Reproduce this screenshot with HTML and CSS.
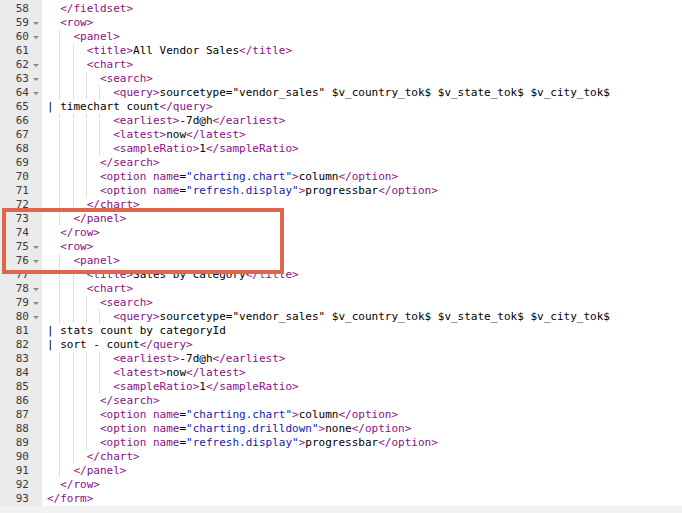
FILE: index.html
```html
<!doctype html>
<html>
<head>
<meta charset="utf-8">
<title>dashboard.xml</title>
<link rel="stylesheet" href="styles.css">
</head>
<body>
<div class="editor">
  <div class="lines">
    <div class="row"><span class="gc"><b>58</b><i></i></span><span class="code">  <span class="t">&lt;/fieldset&gt;</span></span></div>
    <div class="row"><span class="gc"><b>59</b><i class="fold"></i></span><span class="code">  <span class="t">&lt;row&gt;</span></span></div>
    <div class="row"><span class="gc"><b>60</b><i class="fold"></i></span><span class="code"><span class="ig">  </span>  <span class="t">&lt;panel&gt;</span></span></div>
    <div class="row"><span class="gc"><b>61</b><i></i></span><span class="code"><span class="ig">  </span><span class="ig">  </span>  <span class="t">&lt;title&gt;</span>All Vendor Sales<span class="t">&lt;/title&gt;</span></span></div>
    <div class="row"><span class="gc"><b>62</b><i class="fold"></i></span><span class="code"><span class="ig">  </span><span class="ig">  </span>  <span class="t">&lt;chart&gt;</span></span></div>
    <div class="row"><span class="gc"><b>63</b><i class="fold"></i></span><span class="code"><span class="ig">  </span><span class="ig">  </span><span class="ig">  </span>  <span class="t">&lt;search&gt;</span></span></div>
    <div class="row"><span class="gc"><b>64</b><i class="fold"></i></span><span class="code"><span class="ig">  </span><span class="ig">  </span><span class="ig">  </span><span class="ig">  </span>  <span class="t">&lt;query&gt;</span>sourcetype="vendor_sales" $v_country_tok$ $v_state_tok$ $v_city_tok$</span></div>
    <div class="row"><span class="gc"><b>65</b><i></i></span><span class="code">| timechart count<span class="t">&lt;/query&gt;</span></span></div>
    <div class="row"><span class="gc"><b>66</b><i></i></span><span class="code"><span class="ig">  </span><span class="ig">  </span><span class="ig">  </span><span class="ig">  </span>  <span class="t">&lt;earliest&gt;</span>-7d@h<span class="t">&lt;/earliest&gt;</span></span></div>
    <div class="row"><span class="gc"><b>67</b><i></i></span><span class="code"><span class="ig">  </span><span class="ig">  </span><span class="ig">  </span><span class="ig">  </span>  <span class="t">&lt;latest&gt;</span>now<span class="t">&lt;/latest&gt;</span></span></div>
    <div class="row"><span class="gc"><b>68</b><i></i></span><span class="code"><span class="ig">  </span><span class="ig">  </span><span class="ig">  </span><span class="ig">  </span>  <span class="t">&lt;sampleRatio&gt;</span>1<span class="t">&lt;/sampleRatio&gt;</span></span></div>
    <div class="row"><span class="gc"><b>69</b><i></i></span><span class="code"><span class="ig">  </span><span class="ig">  </span><span class="ig">  </span>  <span class="t">&lt;/search&gt;</span></span></div>
    <div class="row"><span class="gc"><b>70</b><i></i></span><span class="code"><span class="ig">  </span><span class="ig">  </span><span class="ig">  </span>  <span class="t">&lt;option</span> <span class="a">name</span>=<span class="s">"charting.chart"</span><span class="t">&gt;</span>column<span class="t">&lt;/option&gt;</span></span></div>
    <div class="row"><span class="gc"><b>71</b><i></i></span><span class="code"><span class="ig">  </span><span class="ig">  </span><span class="ig">  </span>  <span class="t">&lt;option</span> <span class="a">name</span>=<span class="s">"refresh.display"</span><span class="t">&gt;</span>progressbar<span class="t">&lt;/option&gt;</span></span></div>
    <div class="row"><span class="gc"><b>72</b><i></i></span><span class="code"><span class="ig">  </span><span class="ig">  </span>  <span class="t">&lt;/chart&gt;</span></span></div>
    <div class="row"><span class="gc"><b>73</b><i></i></span><span class="code"><span class="ig">  </span>  <span class="t">&lt;/panel&gt;</span></span></div>
    <div class="row"><span class="gc"><b>74</b><i></i></span><span class="code">  <span class="t">&lt;/row&gt;</span></span></div>
    <div class="row"><span class="gc"><b>75</b><i class="fold"></i></span><span class="code">  <span class="t">&lt;row&gt;</span></span></div>
    <div class="row"><span class="gc"><b>76</b><i class="fold"></i></span><span class="code"><span class="ig">  </span>  <span class="t">&lt;panel&gt;</span></span></div>
    <div class="row"><span class="gc"><b>77</b><i></i></span><span class="code"><span class="ig">  </span><span class="ig">  </span>  <span class="t">&lt;title&gt;</span>Sales by Category<span class="t">&lt;/title&gt;</span></span></div>
    <div class="row"><span class="gc"><b>78</b><i class="fold"></i></span><span class="code"><span class="ig">  </span><span class="ig">  </span>  <span class="t">&lt;chart&gt;</span></span></div>
    <div class="row"><span class="gc"><b>79</b><i class="fold"></i></span><span class="code"><span class="ig">  </span><span class="ig">  </span><span class="ig">  </span>  <span class="t">&lt;search&gt;</span></span></div>
    <div class="row"><span class="gc"><b>80</b><i class="fold"></i></span><span class="code"><span class="ig">  </span><span class="ig">  </span><span class="ig">  </span><span class="ig">  </span>  <span class="t">&lt;query&gt;</span>sourcetype="vendor_sales" $v_country_tok$ $v_state_tok$ $v_city_tok$</span></div>
    <div class="row"><span class="gc"><b>81</b><i></i></span><span class="code">| stats count by categoryId</span></div>
    <div class="row"><span class="gc"><b>82</b><i></i></span><span class="code">| sort - count<span class="t">&lt;/query&gt;</span></span></div>
    <div class="row"><span class="gc"><b>83</b><i></i></span><span class="code"><span class="ig">  </span><span class="ig">  </span><span class="ig">  </span><span class="ig">  </span>  <span class="t">&lt;earliest&gt;</span>-7d@h<span class="t">&lt;/earliest&gt;</span></span></div>
    <div class="row"><span class="gc"><b>84</b><i></i></span><span class="code"><span class="ig">  </span><span class="ig">  </span><span class="ig">  </span><span class="ig">  </span>  <span class="t">&lt;latest&gt;</span>now<span class="t">&lt;/latest&gt;</span></span></div>
    <div class="row"><span class="gc"><b>85</b><i></i></span><span class="code"><span class="ig">  </span><span class="ig">  </span><span class="ig">  </span><span class="ig">  </span>  <span class="t">&lt;sampleRatio&gt;</span>1<span class="t">&lt;/sampleRatio&gt;</span></span></div>
    <div class="row"><span class="gc"><b>86</b><i></i></span><span class="code"><span class="ig">  </span><span class="ig">  </span><span class="ig">  </span>  <span class="t">&lt;/search&gt;</span></span></div>
    <div class="row"><span class="gc"><b>87</b><i></i></span><span class="code"><span class="ig">  </span><span class="ig">  </span><span class="ig">  </span>  <span class="t">&lt;option</span> <span class="a">name</span>=<span class="s">"charting.chart"</span><span class="t">&gt;</span>column<span class="t">&lt;/option&gt;</span></span></div>
    <div class="row"><span class="gc"><b>88</b><i></i></span><span class="code"><span class="ig">  </span><span class="ig">  </span><span class="ig">  </span>  <span class="t">&lt;option</span> <span class="a">name</span>=<span class="s">"charting.drilldown"</span><span class="t">&gt;</span>none<span class="t">&lt;/option&gt;</span></span></div>
    <div class="row"><span class="gc"><b>89</b><i></i></span><span class="code"><span class="ig">  </span><span class="ig">  </span><span class="ig">  </span>  <span class="t">&lt;option</span> <span class="a">name</span>=<span class="s">"refresh.display"</span><span class="t">&gt;</span>progressbar<span class="t">&lt;/option&gt;</span></span></div>
    <div class="row"><span class="gc"><b>90</b><i></i></span><span class="code"><span class="ig">  </span><span class="ig">  </span>  <span class="t">&lt;/chart&gt;</span></span></div>
    <div class="row"><span class="gc"><b>91</b><i></i></span><span class="code"><span class="ig">  </span>  <span class="t">&lt;/panel&gt;</span></span></div>
    <div class="row"><span class="gc"><b>92</b><i></i></span><span class="code">  <span class="t">&lt;/row&gt;</span></span></div>
    <div class="row"><span class="gc"><b>93</b><i></i></span><span class="code"><span class="t">&lt;/form&gt;</span></span></div>
  </div>
  <div class="callout"></div>
</div>
</body>
</html>
```

FILE: styles.css
```css
* {margin: 0; padding: 0; box-sizing: border-box;}
body {
  background: #f2f2f2;
  font-family: "DejaVu Sans Mono", "Liberation Mono", monospace;
  font-size: 11px;
}
.editor {
  position: relative;
  height: 506px;
  overflow: hidden;
  background: #fff;
  border-top: 2px solid #ebebeb;
  border-top: 0;
}
.lines {
  padding-top: 2px;
  background: linear-gradient(to right, #ebebeb 42px, #fff 42px);
}
.row {
  display: flex;
  height: 14px;
  line-height: 14px;
}
.gc {
  display: flex;
  flex: none;
  width: 42px;
  background: #ebebeb;
  color: #3a3a3a;
}
.gc b {
  font-weight: normal;
  width: 29px;
  text-align: right;
}
.gc i {
  position: relative;
  width: 13px;
}
.gc i.fold:after {
  content: "";
  position: absolute;
  left: 4px;
  top: 6px;
  border-left: 3px solid transparent;
  border-right: 3px solid transparent;
  border-top: 3px solid #8a8a8a;
}
.code {
  padding-left: 5px;
  white-space: pre;
  color: #000;
}
.ig {
  display: inline-block;
  height: 14px;
  vertical-align: top;
  background-image: repeating-linear-gradient(to bottom, #c4c4c4 0 1px, transparent 1px 2px);
  background-size: 1px 100%;
  background-position: right top;
  background-repeat: no-repeat;
}
.t {color: #881280;}
.a {color: #881280;}
.s {color: #1a1aa6;}
.callout {
  position: absolute;
  left: 2px;
  top: 208px;
  width: 282px;
  height: 66px;
  border: 4px solid #de674b;
}
```
